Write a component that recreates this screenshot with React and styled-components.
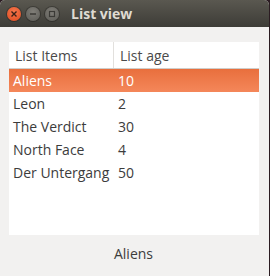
import styled, { createGlobalStyle } from "styled-components";

const GlobalStyle = createGlobalStyle`
  html, body {
    margin: 0;
    padding: 0;
    background: #2b1c22;
  }
  body {
    font-family: "Open Sans", "Noto Sans", "DejaVu Sans", sans-serif;
  }
`;

const Window = styled.div`
  width: 269px;
  height: 276px;
  display: flex;
  flex-direction: column;
  background: #f2f1f0;
  border-radius: 5px 5px 0 0;
  overflow: hidden;
`;

const TitleBar = styled.div`
  height: 27px;
  flex: none;
  display: flex;
  align-items: center;
  padding-left: 7px;
  background: linear-gradient(#5a5850, #3d3c37);
  box-sizing: border-box;
`;

const Buttons = styled.div`
  display: flex;
  gap: 5px;
  margin-right: 12px;
`;

const CircleButton = styled.div`
  width: 14px;
  height: 14px;
  border-radius: 50%;
  display: flex;
  align-items: center;
  justify-content: center;
  background: ${(p) =>
    p.$close
      ? "radial-gradient(circle at 50% 35%, #f5774d, #df4a1f)"
      : "radial-gradient(circle at 50% 35%, #807e78, #5c5b56)"};
  box-shadow: 0 0 0 1px rgba(0, 0, 0, 0.25);
`;

const Title = styled.div`
  color: #dfdbd2;
  font-weight: 700;
  font-size: 14px;
  padding-bottom: 1px;
`;

const Content = styled.div`
  flex: 1;
  display: flex;
  flex-direction: column;
  padding: 15px 10px 0 9px;
`;

const Panel = styled.div`
  height: 193px;
  background: #ffffff;
`;

const Row = styled.div`
  display: grid;
  grid-template-columns: 104px 1fr;
  height: ${(p) => (p.$header ? "27px" : "23px")};
  align-items: center;
  font-size: 14px;
  color: ${(p) => (p.$selected ? "#ffffff" : "#3c3c3c")};
  background: ${(p) =>
    p.$selected ? "linear-gradient(#e96f3d, #f4875a)" : "transparent"};
  border-bottom: ${(p) => (p.$header ? "1px solid #cfcdca" : "none")};
  box-sizing: border-box;
`;

const Cell = styled.div`
  padding-left: ${(p) => (p.$header ? "6px" : p.$second ? "5px" : "4px")};
  height: 100%;
  display: flex;
  align-items: center;
  white-space: nowrap;
  border-left: ${(p) => (p.$divider ? "1px solid #e2e0dd" : "none")};
  color: ${(p) => (p.$header ? "#4a4a4a" : "inherit")};
`;

const Footer = styled.div`
  flex: 1;
  display: flex;
  justify-content: center;
  padding-top: 9px;
  font-size: 14px;
  color: #3c3c3c;
  padding-right: 1px;
`;

const items = [
  ["Aliens", 10],
  ["Leon", 2],
  ["The Verdict", 30],
  ["North Face", 4],
  ["Der Untergang", 50],
];

export default function App() {
  const selected = 0;
  return (
    <>
      <GlobalStyle />
      <Window>
        <TitleBar>
          <Buttons>
            <CircleButton $close>
              <svg width="8" height="8" viewBox="0 0 8 8">
                <path d="M1.5 1.5 L6.5 6.5 M6.5 1.5 L1.5 6.5" stroke="#3a2118" strokeWidth="1.4" />
              </svg>
            </CircleButton>
            <CircleButton>
              <svg width="8" height="8" viewBox="0 0 8 8">
                <path d="M1 4 H7" stroke="#3b3a36" strokeWidth="1.4" />
              </svg>
            </CircleButton>
            <CircleButton>
              <svg width="8" height="8" viewBox="0 0 8 8">
                <rect x="1.5" y="1.5" width="5" height="5" fill="none" stroke="#3b3a36" strokeWidth="1.2" />
              </svg>
            </CircleButton>
          </Buttons>
          <Title>List view</Title>
        </TitleBar>
        <Content>
          <Panel>
            <Row $header>
              <Cell $header>List Items</Cell>
              <Cell $header $divider>List age</Cell>
            </Row>
            {items.map(([name, age], i) => (
              <Row key={name} $selected={i === selected}>
                <Cell>{name}</Cell>
                <Cell $second>{age}</Cell>
              </Row>
            ))}
          </Panel>
          <Footer>{items[selected][0]}</Footer>
        </Content>
      </Window>
    </>
  );
}
